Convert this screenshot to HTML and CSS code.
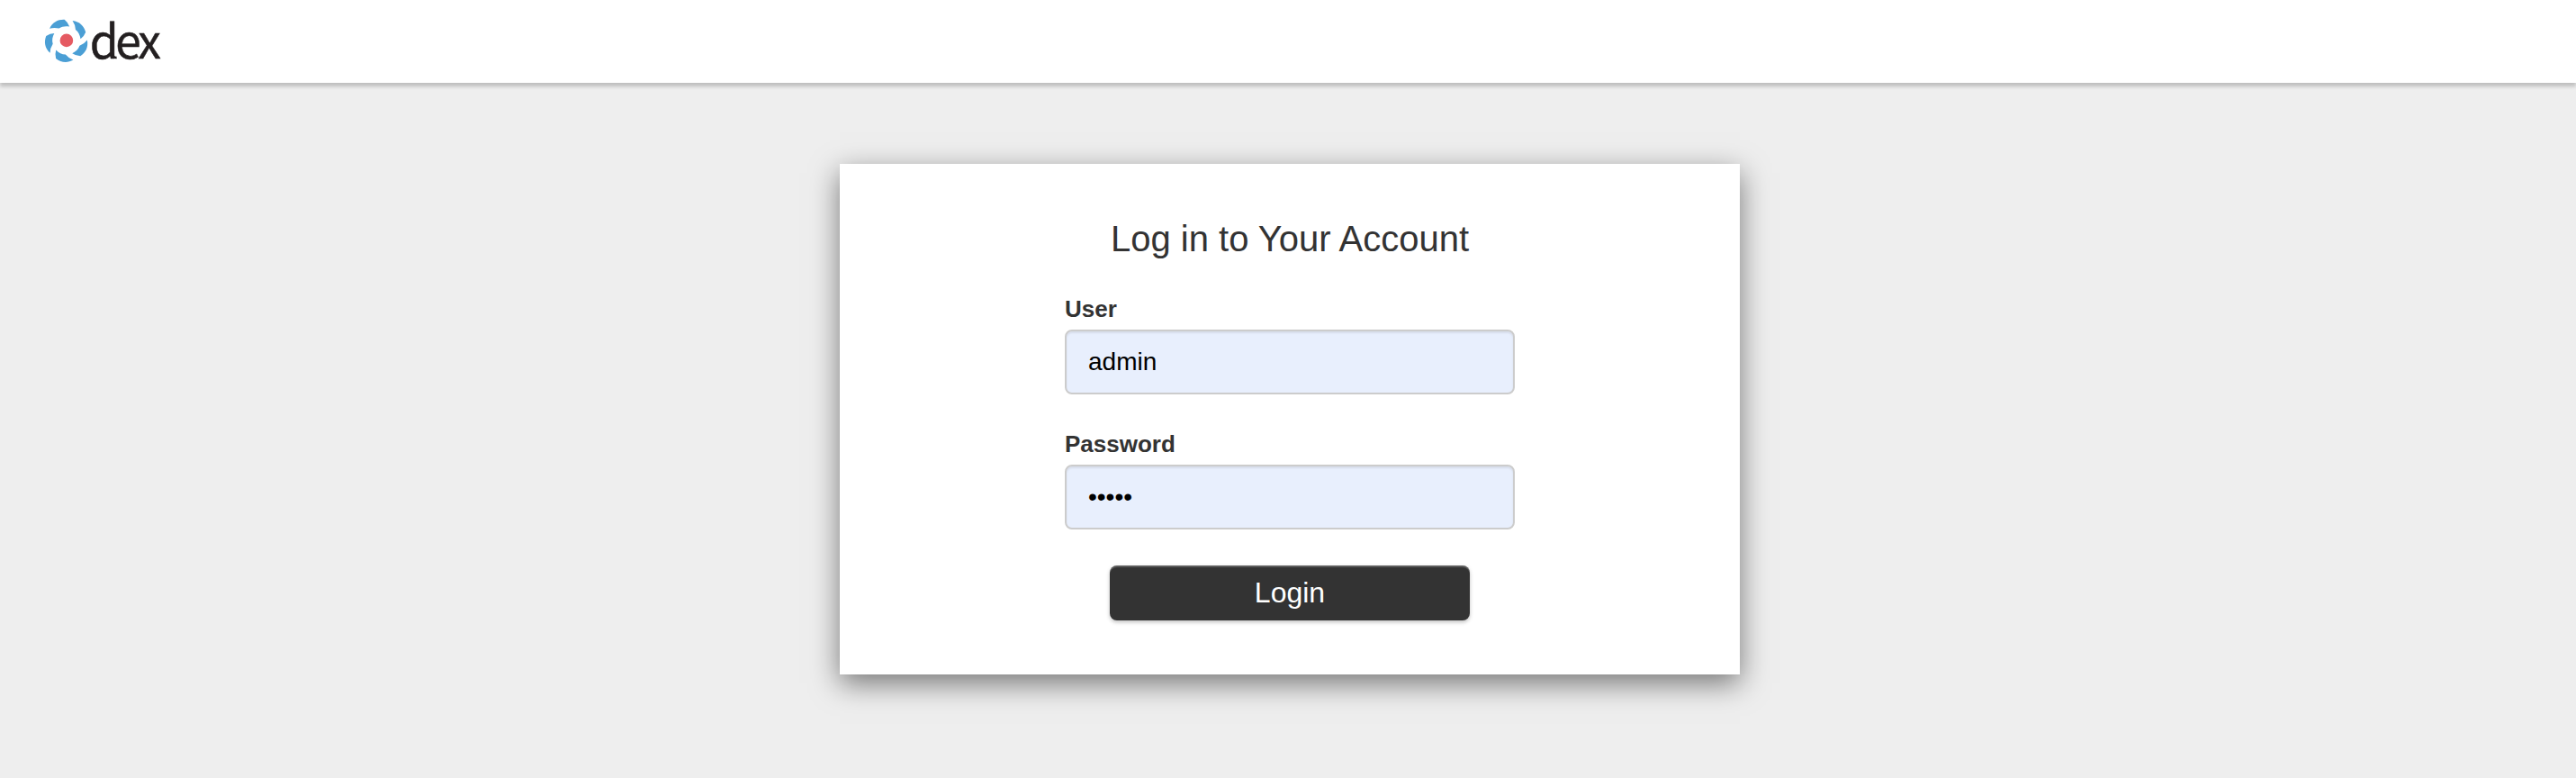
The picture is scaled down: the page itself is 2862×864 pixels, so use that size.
FILE: index.html
```html
<!DOCTYPE html>
<html lang="en">
<head>
<meta charset="utf-8">
<title>dex</title>
<link rel="stylesheet" href="styles.css">
</head>
<body>
<header class="navbar">
  <svg class="logo" viewBox="0 0 170 92" role="img" aria-label="dex">
    <defs>
      <path id="blade" d="M20.500-67.500C45-65 60-49 65.500-28.500Q60-14 48-5C46-19 41-29 31-37Q30-54 20.500-67.500Z"/>
    </defs>
    <g transform="translate(43.900 44.900) scale(.325)">
      <g class="blades">
        <use href="#blade"/>
        <use href="#blade" transform="rotate(72)"/>
        <use href="#blade" transform="rotate(144)"/>
        <use href="#blade" transform="rotate(216)"/>
        <use href="#blade" transform="rotate(288)"/>
      </g>
      <circle class="core" r="22.500"/>
    </g>
    <text class="wordmark" x="69.800 98.300 123.300" y="65">dex</text>
    <path class="tail" d="M95.200 59.500Q95.500 64.500 99.600 63.900"/>
  </svg>
</header>
<main class="container">
  <form class="panel">
    <h2 class="heading">Log in to Your Account</h2>
    <div class="field">
      <label class="label" for="login">User</label>
      <input class="input" id="login" type="text" value="admin">
    </div>
    <div class="field">
      <label class="label" for="password">Password</label>
      <input class="input" id="password" type="password" value="admin">
    </div>
    <button class="button" type="button">Login</button>
  </form>
</main>
</body>
</html>
```
FILE: styles.css
```css
* { box-sizing: border-box; }
body {
  margin: 0;
  height: 864px;
  overflow: hidden;
  background: #eee;
  color: #333;
  font-family: "Liberation Sans", Arial, sans-serif;
}
.navbar {
  height: 92px;
  padding-left: 30px;
  background: #fff;
  box-shadow: 0 4px 4px rgba(0, 0, 0, .2);
}
.logo { display: block; width: 170px; height: 92px; }
.blades { fill: #4b9fd5; }
.core { fill: #e55a62; }
.wordmark {
  fill: #231f20;
  stroke: #231f20;
  stroke-width: .5;
  font-family: "Noto Sans CJK SC", "Noto Sans", sans-serif;
  font-size: 51.5px;
}
.tail { fill: none; stroke: #231f20; stroke-width: 2.6; }
.container {
  display: flex;
  justify-content: center;
  padding: 90px 0 0 4px;
}
.panel {
  display: flex;
  flex-direction: column;
  align-items: center;
  width: 1000px;
  height: 567px;
  padding-top: 60px;
  background: #fff;
  box-shadow: 0 10px 30px rgba(0, 0, 0, .5);
}
.heading {
  margin: 0 0 20px;
  font-size: 40px;
  font-weight: 400;
  line-height: 46px;
}
.field { width: 500px; margin: 20px 0; }
.label {
  display: block;
  height: 30px;
  margin-bottom: 8px;
  font-size: 26px;
  font-weight: 700;
  line-height: 30px;
}
.input {
  display: block;
  width: 500px;
  height: 72px;
  padding: 12px 24px;
  border: 2px solid #ccc;
  border-radius: 8px;
  background: #e8effd;
  box-shadow: inset 0 2px 2px rgba(0, 0, 0, .075);
  color: #000;
  font: 28px "Liberation Sans", Arial, sans-serif;
}
.button {
  width: 400px;
  height: 61px;
  margin-top: 20px;
  padding: 0;
  border: 0;
  border-radius: 8px;
  background: #333;
  box-shadow: 0 2px 4px rgba(0, 0, 0, .25), inset 0 2px 0 rgba(255, 255, 255, .2);
  color: #fff;
  font: 32px "Liberation Sans", Arial, sans-serif;
}
```
